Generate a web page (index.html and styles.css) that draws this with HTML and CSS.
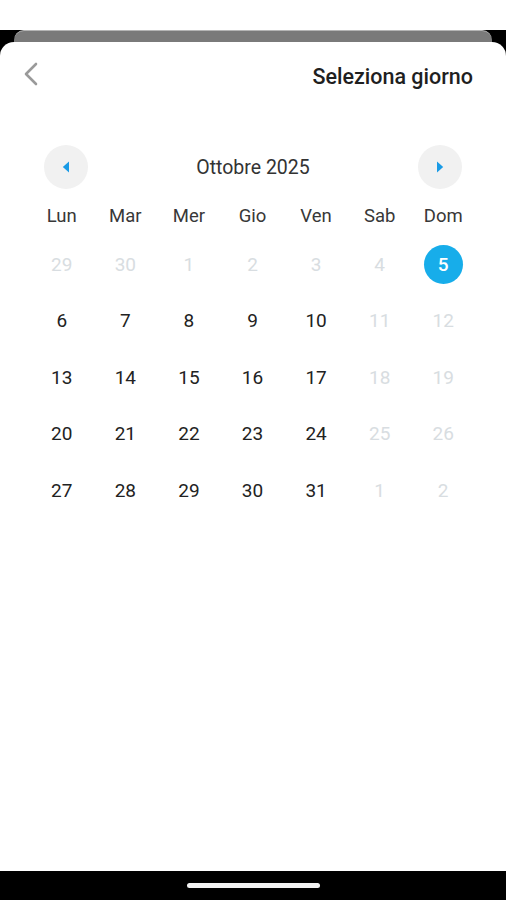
FILE: index.html
```html
<!DOCTYPE html>
<html lang="it">
<head>
<meta charset="utf-8">
<title>Seleziona giorno</title>
<link rel="stylesheet" href="styles.css">
</head>
<body>
<div class="screen">
  <div class="status"></div>
  <div class="peek"></div>
  <div class="sheet">
    <div class="header">
      <svg class="back" width="16" height="24" viewBox="0 0 16 24" aria-hidden="true">
        <path d="M13 2 L3 12 L13 22" fill="none" stroke="#9a9a9a" stroke-width="2.6" stroke-linecap="round" stroke-linejoin="round"/>
      </svg>
      <div class="title">Seleziona giorno</div>
    </div>
    <div class="monthnav">
      <div class="navbtn">
        <svg width="8" height="12" viewBox="0 0 8 12" aria-hidden="true"><path d="M7 0.5 L7 11.5 L0.8 6 Z" fill="#1a9be6"/></svg>
      </div>
      <div class="month">Ottobre 2025</div>
      <div class="navbtn">
        <svg width="8" height="12" viewBox="0 0 8 12" aria-hidden="true"><path d="M1 0.5 L1 11.5 L7.2 6 Z" fill="#1a9be6"/></svg>
      </div>
    </div>
    <div class="weekdays">
      <div>Lun</div><div>Mar</div><div>Mer</div><div>Gio</div><div>Ven</div><div>Sab</div><div>Dom</div>
    </div>
    <div class="days">
      <div class="day off">29</div><div class="day off">30</div><div class="day off">1</div><div class="day off">2</div><div class="day off">3</div><div class="day off">4</div><div class="day"><span class="sel">5</span></div>
      <div class="day">6</div><div class="day">7</div><div class="day">8</div><div class="day">9</div><div class="day">10</div><div class="day off">11</div><div class="day off">12</div>
      <div class="day">13</div><div class="day">14</div><div class="day">15</div><div class="day">16</div><div class="day">17</div><div class="day off">18</div><div class="day off">19</div>
      <div class="day">20</div><div class="day">21</div><div class="day">22</div><div class="day">23</div><div class="day">24</div><div class="day off">25</div><div class="day off">26</div>
      <div class="day">27</div><div class="day">28</div><div class="day">29</div><div class="day">30</div><div class="day">31</div><div class="day off">1</div><div class="day off">2</div>
    </div>
  </div>
  <div class="navbar"><div class="pill"></div></div>
</div>
</body>
</html>
```
FILE: styles.css
```css
* { box-sizing: border-box; }
html, body { margin: 0; padding: 0; }
body {
  font-family: Roboto, "Noto Sans", "Liberation Sans", sans-serif;
  background: #000;
}
.screen {
  width: 506px;
  height: 900px;
  background: #000;
  display: flex;
  flex-direction: column;
  overflow: hidden;
}
.status {
  height: 30px;
  background: #fff;
  flex: none;
}
.peek {
  height: 12px;
  margin: 0 14px;
  background: #7a7a7a;
  border-top: 1px solid #b5b5b5;
  border-radius: 10px 10px 0 0;
  flex: none;
}
.sheet {
  flex: 1;
  background: #fff;
  border-radius: 14px 14px 0 0;
  display: flex;
  flex-direction: column;
}
.header {
  margin-top: 14px;
  height: 40px;
  display: flex;
  align-items: center;
  justify-content: space-between;
  padding: 0 33px 0 23px;
}
.back { display: block; margin-top: -4px; }
.title {
  font-size: 21.5px;
  font-weight: 500;
  color: #1f1f1f;
}
.monthnav {
  margin-top: 49px;
  height: 44px;
  display: flex;
  align-items: center;
  justify-content: space-between;
  padding: 0 44px;
}
.navbtn {
  width: 44px;
  height: 44px;
  border-radius: 50%;
  background: #f1f1f1;
  display: flex;
  align-items: center;
  justify-content: center;
}
.navbtn svg { display: block; }
.month {
  font-size: 19.5px;
  color: #333;
}
.weekdays, .days {
  display: grid;
  grid-template-columns: repeat(7, 1fr);
  padding: 0 31px 0 30px;
}
.weekdays {
  margin-top: 6px;
  height: 41px;
  align-items: center;
  justify-items: center;
  font-size: 18.5px;
  color: #383838;
}
.days {
  grid-auto-rows: 56.5px;
}
.day {
  display: flex;
  align-items: center;
  justify-content: center;
  font-size: 19px;
  color: #222;
}
.day.off { color: #d8dde1; }
.sel {
  width: 39px;
  height: 39px;
  border-radius: 50%;
  background: #17adea;
  color: #fff;
  font-weight: 500;
  display: flex;
  align-items: center;
  justify-content: center;
}
.navbar {
  height: 29px;
  flex: none;
  background: #000;
  display: flex;
  justify-content: center;
  padding-top: 12px;
}
.pill {
  width: 133px;
  height: 5px;
  border-radius: 3px;
  background: #f2f2f2;
}
```
